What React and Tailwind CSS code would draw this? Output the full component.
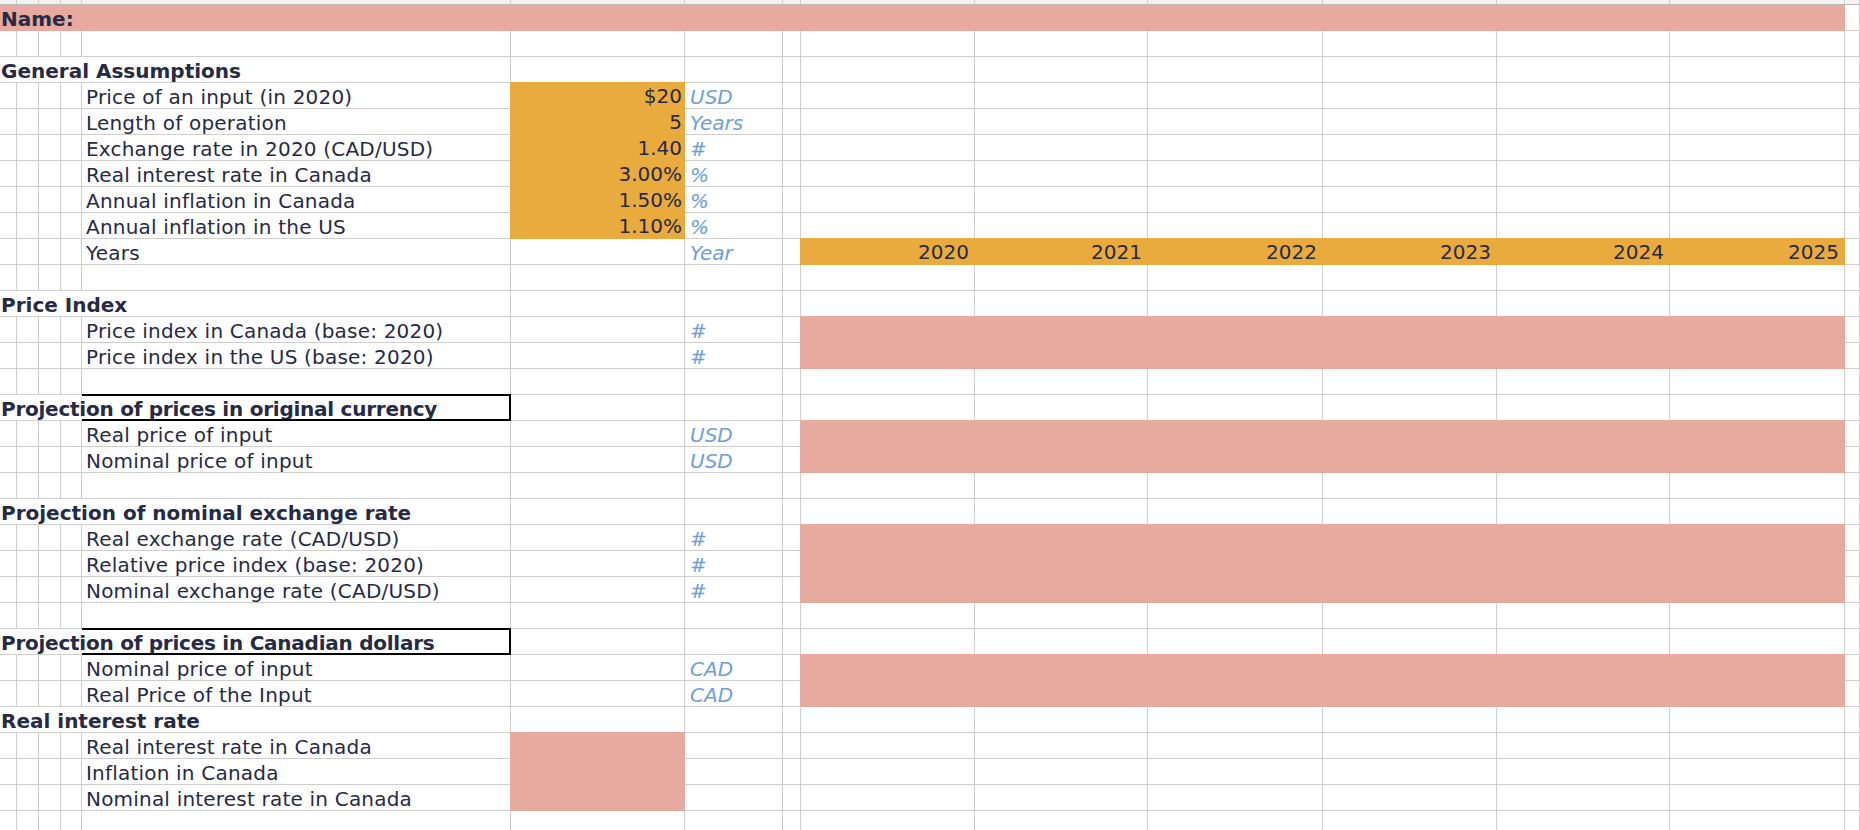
import React from "react";

const GRID = "border-r border-b border-[#cfcfcf]";
const ORANGE = "bg-[#eaab3e] border-r border-b border-[#eaab3e] -ml-px -mt-px";
const PINK = "bg-[#e8a9a0] border-r border-b border-[#e8a9a0] -ml-px -mt-px";
const TXT = "pt-[2px] leading-[25px] text-[20px] whitespace-nowrap";

const years = [2020, 2021, 2022, 2023, 2024, 2025];

const rows = [
    { type: "name" },
    { type: "blank" },
    { type: "heading", text: "General Assumptions" },
    { type: "item", label: "Price of an input (in 2020)", value: "$20", unit: "USD", input: "orange" },
    { type: "item", label: "Length of operation", value: "5", unit: "Years", input: "orange" },
    { type: "item", label: "Exchange rate in 2020 (CAD/USD)", value: "1.40", unit: "#", input: "orange" },
    { type: "item", label: "Real interest rate in Canada", value: "3.00%", unit: "%", input: "orange" },
    { type: "item", label: "Annual inflation in Canada", value: "1.50%", unit: "%", input: "orange" },
    { type: "item", label: "Annual inflation in the US", value: "1.10%", unit: "%", input: "orange" },
    { type: "item", label: "Years", unit: "Year", band: "years" },
    { type: "blank" },
    { type: "heading", text: "Price Index" },
    { type: "item", label: "Price index in Canada (base: 2020)", unit: "#", band: "pink" },
    { type: "item", label: "Price index in the US (base: 2020)", unit: "#", band: "pink" },
    { type: "blank" },
    { type: "boxed", text: "Projection of prices in original currency" },
    { type: "item", label: "Real price of input", unit: "USD", band: "pink" },
    { type: "item", label: "Nominal price of input", unit: "USD", band: "pink" },
    { type: "blank" },
    { type: "heading", text: "Projection of nominal exchange rate" },
    { type: "item", label: "Real exchange rate (CAD/USD)", unit: "#", band: "pink" },
    { type: "item", label: "Relative price index (base: 2020)", unit: "#", band: "pink" },
    { type: "item", label: "Nominal exchange rate (CAD/USD)", unit: "#", band: "pink" },
    { type: "blank" },
    { type: "boxed", text: "Projection of prices in Canadian dollars" },
    { type: "item", label: "Nominal price of input", unit: "CAD", band: "pink" },
    { type: "item", label: "Real Price of the Input", unit: "CAD", band: "pink" },
    { type: "heading", text: "Real interest rate" },
    { type: "item", label: "Real interest rate in Canada", input: "pink" },
    { type: "item", label: "Inflation in Canada", input: "pink" },
    { type: "item", label: "Nominal interest rate in Canada", input: "pink" },
    { type: "blank" },
];

// plain empty cells, n of them
const plain = (key, n) =>
    Array.from({ length: n }, (_, i) => <div key={`${key}-${i}`} className={GRID} />);

function renderRow(row, r) {
    const k = `r${r}`;

    if (row.type === "name") {
        return [
            <div key={`${k}-a`} className={`col-span-14 bg-[#e8a9a0] border-b border-[#e8a9a0] pl-px font-bold ${TXT}`}>
                Name:
            </div>,
            ...plain(`${k}-o`, 1),
        ];
    }

    if (row.type === "blank") return plain(k, 15);

    if (row.type === "heading") {
        return [
            <div key={`${k}-a`} className={`col-span-5 pl-px font-bold ${GRID} ${TXT}`}>
                {row.text}
            </div>,
            ...plain(`${k}-f`, 10),
        ];
    }

    if (row.type === "boxed") {
        return [
            <div key={`${k}-a`} className={`col-span-4 pl-px font-bold tracking-[-0.25px] border-b border-[#cfcfcf] ${TXT}`}>
                {row.text}
            </div>,
            <div key={`${k}-e`} className="-mt-px border-t-2 border-r-2 border-b-2 border-black" />,
            ...plain(`${k}-f`, 10),
        ];
    }

    // regular item row
    let input = <div key={`${k}-f`} className={GRID} />;
    if (row.input === "orange") {
        input = (
            <div key={`${k}-f`} className={`${ORANGE} ${TXT} text-right pr-[2px]`}>
                {row.value}
            </div>
        );
    } else if (row.input === "pink") {
        input = <div key={`${k}-f`} className={PINK} />;
    }

    let band = plain(`${k}-y`, 6);
    if (row.band === "pink") {
        band = [<div key={`${k}-y`} className={`col-span-6 ${PINK}`} />];
    } else if (row.band === "years") {
        band = years.map((y) => (
            <div key={`${k}-y${y}`} className={`${ORANGE} ${TXT} text-right pr-[5px]`}>
                {y}
            </div>
        ));
    }

    return [
        ...plain(`${k}-ad`, 4),
        <div key={`${k}-e`} className={`${GRID} ${TXT} pl-[4px] tracking-[0.2px]`}>
            {row.label}
        </div>,
        input,
        <div key={`${k}-g`} className={`${GRID} ${TXT} pl-[5px] italic text-[#6fa0d8]`}>
            {row.unit}
        </div>,
        ...plain(`${k}-h`, 1),
        ...band,
        ...plain(`${k}-o`, 1),
    ];
}

export default function App() {
    return (
        <div className="w-[1860px] h-[830px] overflow-hidden bg-white text-[#272a44] font-['DejaVu_Sans','Verdana',sans-serif]">
            <div className="grid grid-cols-[17px_22px_22px_21px_429px_174px_98px_18px_174px_173px_175px_174px_173px_175px_15px] grid-rows-[5px] auto-rows-[26px]">
                {Array.from({ length: 15 }, (_, i) => (
                    <div key={`top-${i}`} className="bg-[#f3f3f3] border-r border-b border-r-[#cfcfcf] border-b-[#b9b9b9]" />
                ))}
                {rows.map((row, r) => renderRow(row, r))}
            </div>
        </div>
    );
}
